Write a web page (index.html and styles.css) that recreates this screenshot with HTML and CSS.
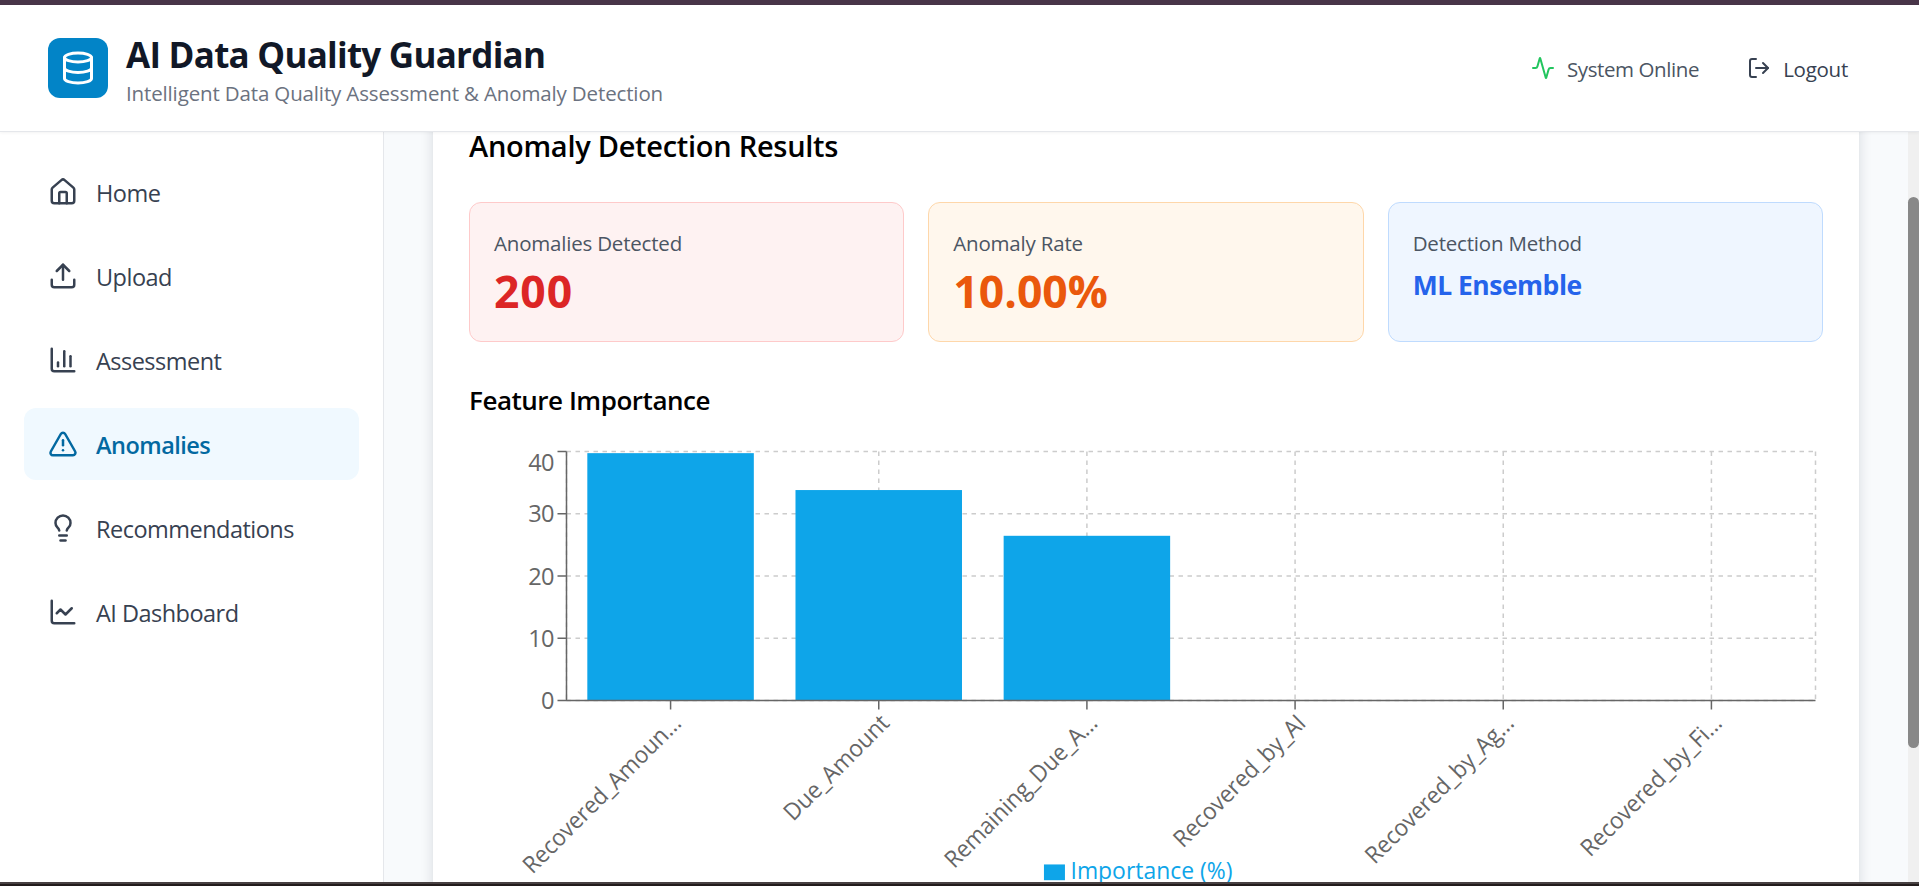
FILE: index.html
```html
<!DOCTYPE html>
<html lang="en">
<head>
<meta charset="utf-8">
<title>AI Data Quality Guardian</title>
<link rel="stylesheet" href="styles.css">
</head>
<body>
<div class="edge-top"></div>
<header class="header">
  <div class="brand">
    <div class="logo"><svg class="icon icon-lg" viewBox="0 0 24 24"><ellipse cx="12" cy="5" rx="9" ry="3"/><path d="M3 5V19A9 3 0 0 0 21 19V5"/><path d="M3 12A9 3 0 0 0 21 12"/></svg></div>
    <div class="brand-text">
      <h1 class="title">AI Data Quality Guardian</h1>
      <p class="subtitle">Intelligent Data Quality Assessment &amp; Anomaly Detection</p>
    </div>
  </div>
  <div class="actions">
    <div class="status"><svg class="icon icon-sm" viewBox="0 0 24 24"><path d="M22 12h-2.480a2 2 0 0 0-1.930 1.460l-2.350 8.360a.25.25 0 0 1-.480 0L9.240 2.180a.25.25 0 0 0-.480 0l-2.350 8.360A2 2 0 0 1 4.490 12H2"/></svg><span class="action-label">System Online</span></div>
    <button class="logout"><svg class="icon icon-sm" viewBox="0 0 24 24"><path d="M9 21H5a2 2 0 0 1-2-2V5a2 2 0 0 1 2-2h4"/><path d="m16 17 5-5-5-5"/><path d="M21 12H9"/></svg><span class="action-label">Logout</span></button>
  </div>
</header>
<div class="layout">
  <nav class="sidebar">
    <a class="nav-item"><svg class="icon" viewBox="0 0 24 24"><path d="M15 21v-8a1 1 0 0 0-1-1h-4a1 1 0 0 0-1 1v8"/><path d="M3 10a2 2 0 0 1 .709-1.528l7-5.999a2 2 0 0 1 2.582 0l7 5.999A2 2 0 0 1 21 10v9a2 2 0 0 1-2 2H5a2 2 0 0 1-2-2z"/></svg><span class="nav-label">Home</span></a>
    <a class="nav-item"><svg class="icon" viewBox="0 0 24 24"><path d="M21 15v4a2 2 0 0 1-2 2H5a2 2 0 0 1-2-2v-4"/><path d="m17 8-5-5-5 5"/><path d="M12 3v12"/></svg><span class="nav-label">Upload</span></a>
    <a class="nav-item"><svg class="icon" viewBox="0 0 24 24"><path d="M3 3v16a2 2 0 0 0 2 2h16"/><path d="M18 17V9"/><path d="M13 17V5"/><path d="M8 17v-3"/></svg><span class="nav-label">Assessment</span></a>
    <a class="nav-item active"><svg class="icon" viewBox="0 0 24 24"><path d="m21.730 18-8-14a2 2 0 0 0-3.480 0l-8 14A2 2 0 0 0 4 21h16a2 2 0 0 0 1.730-3"/><path d="M12 9v4"/><path d="M12 17h.01"/></svg><span class="nav-label">Anomalies</span></a>
    <a class="nav-item"><svg class="icon" viewBox="0 0 24 24"><path d="M15 14c.2-1 .7-1.700 1.500-2.500 1-.9 1.500-2.200 1.500-3.500A6 6 0 0 0 6 8c0 1 .2 2.200 1.500 3.500.7.7 1.300 1.500 1.500 2.500"/><path d="M9 18h6"/><path d="M10 22h4"/></svg><span class="nav-label">Recommendations</span></a>
    <a class="nav-item"><svg class="icon" viewBox="0 0 24 24"><path d="M3 3v16a2 2 0 0 0 2 2h16"/><path d="m19 9-5 5-4-4-3 3"/></svg><span class="nav-label">AI Dashboard</span></a>
  </nav>
  <main class="main">
    <section class="card">
      <h2 class="card-title">Anomaly Detection Results</h2>
      <div class="stats">
        <div class="stat red"><p class="stat-label">Anomalies Detected</p><p class="stat-value stat-count">200</p></div>
        <div class="stat orange"><p class="stat-label">Anomaly Rate</p><p class="stat-value">10.00%</p></div>
        <div class="stat blue"><p class="stat-label">Detection Method</p><p class="stat-method">ML Ensemble</p></div>
      </div>
      <h3 class="chart-title">Feature Importance</h3>
      <svg class="chart" viewBox="0 0 902.67 300">
        <g class="grid">
          <path d="M65 5H897.670M65 46.500H897.670M65 88H897.670M65 129.500H897.670M65 171H897.670"/>
          <path d="M134.390 5V171M273.170 5V171M411.940 5V171M550.720 5V171M689.500 5V171M828.280 5V171M897.670 5V171M65 5V171"/>
        </g>
        <g class="bars">
          <rect x="78.880" y="6.100" width="111" height="164.900"/>
          <rect x="217.660" y="30.700" width="111" height="140.300"/>
          <rect x="356.430" y="61.200" width="111" height="109.800"/>
        </g>
        <path class="axis" d="M65 5V171H897.670M59 5h6M59 46.500h6M59 88h6M59 129.500h6M59 171h6M134.390 171v6M273.170 171v6M411.940 171v6M550.720 171v6M689.500 171v6M828.280 171v6"/>
        <g class="tick">
          <text x="57" y="17.800" textLength="17.500">40</text>
          <text x="57" y="51.900" textLength="17.500">30</text>
          <text x="57" y="94" textLength="17.500">20</text>
          <text x="57" y="135.600" textLength="17.500">10</text>
          <text x="57" y="176.800">0</text>
        </g>
        <g class="tick">
          <text transform="translate(134.39 179) rotate(-45)" y="11.360" textLength="141.500" lengthAdjust="spacingAndGlyphs">Recovered_Amoun...</text>
          <text transform="translate(273.17 179) rotate(-45)" y="11.360" textLength="92" lengthAdjust="spacingAndGlyphs">Due_Amount</text>
          <text transform="translate(411.94 179) rotate(-45)" y="11.360" textLength="136.500" lengthAdjust="spacingAndGlyphs">Remaining_Due_A...</text>
          <text transform="translate(550.72 179) rotate(-45)" y="11.360" textLength="117" lengthAdjust="spacingAndGlyphs">Recovered_by_AI</text>
          <text transform="translate(689.5 179) rotate(-45)" y="11.360" textLength="132.500" lengthAdjust="spacingAndGlyphs">Recovered_by_Ag...</text>
          <text transform="translate(828.28 179) rotate(-45)" y="11.360" textLength="125.500" lengthAdjust="spacingAndGlyphs">Recovered_by_Fi...</text>
        </g>
        <g class="legend">
          <rect x="383.300" y="280.300" width="14" height="10.500"/>
          <text x="401" y="289.900" textLength="108" lengthAdjust="spacingAndGlyphs">Importance (%)</text>
        </g>
      </svg>
    </section>
  </main>
  <div class="scrollbar"><div class="thumb"></div></div>
</div>
<div class="edge-bottom"></div>
</body>
</html>
```
FILE: styles.css
```css
* { box-sizing: border-box; margin: 0; padding: 0; }
body { width: 1919px; height: 886px; overflow: hidden; display: flex; flex-direction: column; background: #fff; font-family: "Open Sans", "Noto Sans", sans-serif; font-size: 24px; color: #000; }
.edge-top { height: 5px; flex: none; background: #483548; }
.edge-bottom { height: 4px; flex: none; background: #231c1c; border-top: 2px solid #484142; }
.header { height: 127px; flex: none; display: flex; align-items: center; justify-content: space-between; padding: 0 71px 0 48px; background: #fff; border-bottom: 1px solid #e5e7eb; box-shadow: 0 1px 3px rgba(0,0,0,.05); position: relative; z-index: 2; }
.icon { width: 30px; height: 30px; flex: none; fill: none; stroke: currentColor; stroke-width: 2; stroke-linecap: round; stroke-linejoin: round; }
.icon-sm { width: 24px; height: 24px; }
.icon-lg { width: 36px; height: 36px; }
.brand { display: flex; align-items: center; gap: 18px; }
.brand-text { padding-top: 3px; }
.logo { width: 60px; height: 60px; border-radius: 12px; background: #0284c7; color: #fff; display: flex; align-items: center; justify-content: center; }
.title { font-size: 35px; line-height: 48px; font-weight: 700; letter-spacing: -.75px; color: #111827; }
.subtitle { font-size: 20.500px; line-height: 29px; letter-spacing: -.143px; color: #6b7280; }
.actions { display: flex; align-items: center; gap: 48px; font-size: 20.500px; }
.status, .logout { display: flex; align-items: center; gap: 12px; }
.action-label { padding-top: 2px; letter-spacing: -.4px; }
.status { color: #4b5563; }
.status .icon { color: #22c55e; }
.logout { border: 0; background: none; font: inherit; color: #374151; }
.logout .action-label { letter-spacing: -.25px; }
.layout { flex: 1; min-height: 0; display: flex; background: #f8fafc; }
.sidebar { width: 384px; flex: none; padding: 24px; background: #fff; border-right: 1px solid #e5e7eb; display: flex; flex-direction: column; gap: 12px; }
.nav-item { height: 72px; width: 335px; flex: none; padding: 0 24px; border-radius: 12px; display: flex; align-items: center; gap: 18px; color: #374151; font-size: 23.500px; }
.nav-label { padding-top: 2px; letter-spacing: -.52px; }
.nav-item.active { background: #f0f9ff; color: #0369a1; font-weight: 600; }
.main { flex: 1; min-width: 0; padding: 0 49px; overflow: hidden; }
.card { margin-top: -24px; height: 830px; padding: 17px 36px; background: #fff; box-shadow: 0 6px 12px rgba(15,23,42,.14); }
.card-title { font-size: 29px; line-height: 42px; font-weight: 600; letter-spacing: -.28px; margin-bottom: 35px; }
.stats { display: grid; grid-template-columns: repeat(3, 1fr); gap: 24px; }
.stat { height: 140px; padding: 25px 24px 18px; border: 1px solid; border-radius: 12px; }
.stat-label { font-size: 20.500px; line-height: 30px; letter-spacing: -.2px; color: #4b5563; margin-bottom: 6px; }
.stat-value { font-size: 44.500px; line-height: 54px; font-weight: 700; }
.stat-count { letter-spacing: .9px; }
.stat-method { font-size: 26.500px; line-height: 42px; font-weight: 700; letter-spacing: -.5px; }
.red { background: #fef2f2; border-color: #fecaca; color: #dc2626; }
.orange { background: #fff7ed; border-color: #fed7aa; color: #ea580c; }
.blue { background: #eff6ff; border-color: #bfdbfe; color: #2563eb; }
.chart-title { font-size: 26px; line-height: 42px; font-weight: 600; letter-spacing: -.47px; margin: 37px 0 23px; }
.chart { display: block; width: 1354px; height: 450px; }
.grid path { fill: none; stroke: #ccc; stroke-dasharray: 3 3; }
.axis { fill: none; stroke: #666; }
.bars rect, .legend { fill: #0ea5e9; }
.chart text { font-size: 15.700px; }
.tick text { fill: #666; text-anchor: end; }
.scrollbar { width: 11px; flex: none; background: #f0f0f0; padding-top: 65px; }
.thumb { height: 551px; border-radius: 6px; background: #888; }
```
